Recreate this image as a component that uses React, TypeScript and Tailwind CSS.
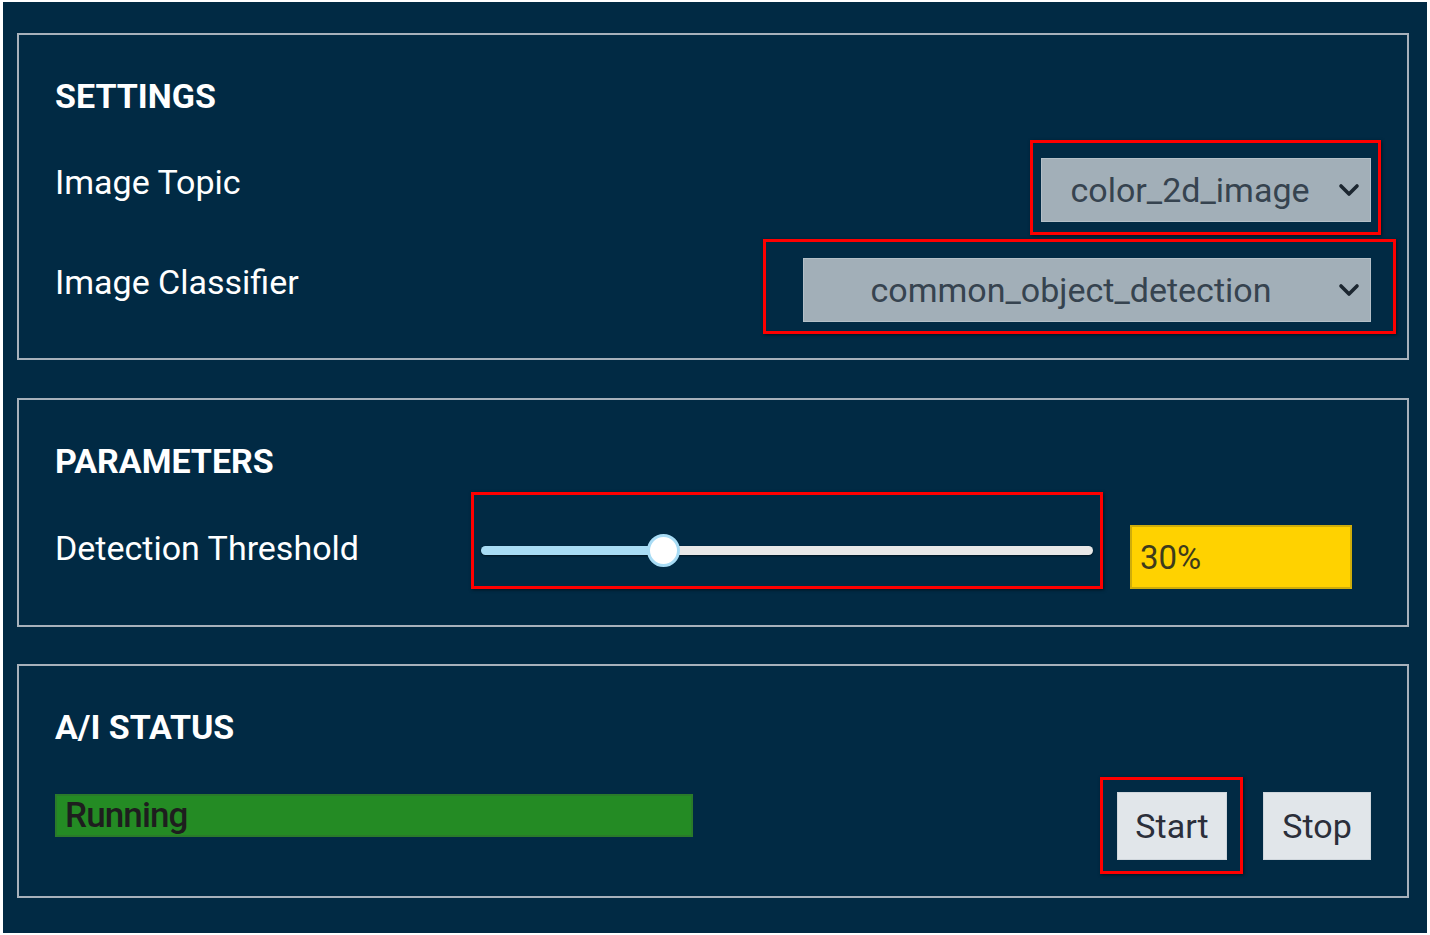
import React from "react";

const font = { fontFamily: "Roboto, 'Liberation Sans', sans-serif" };

function Chevron() {
  return (
    <svg width="22" height="14" viewBox="0 0 22 14" className="shrink-0">
      <path d="M3 3 L11 11 L19 3" fill="none" stroke="#1c2630" strokeWidth="3.6" strokeLinecap="round" strokeLinejoin="round" />
    </svg>
  );
}

function Select({ value, width }: { value: string; width: string }) {
  return (
    <div className={`relative ${width} h-[64px]`}>
      <div className="flex h-full w-full items-center bg-[#a2afb8] border border-[#b4c0c8] pr-[10px]">
        <span className="flex-1 text-center text-[34px] leading-none text-[#36434f]">{value}</span>
        <Chevron />
      </div>
    </div>
  );
}

function RedBox({ className }: { className: string }) {
  return <div className={`pointer-events-none absolute border-[3px] border-[#ff0000] shadow-[1px_1px_3px_rgba(0,0,0,0.5)] ${className}`} />;
}

function Panel({ title, children, className = "" }: { title: string; children: React.ReactNode; className?: string }) {
  return (
    <div className={`border-2 border-[#a7b1bb] px-[36px] pt-[41px] pb-[36px] ${className}`}>
      <div className="h-[40px] text-[34px] font-bold leading-[40px] text-white">{title}</div>
      {children}
    </div>
  );
}

export default function App() {
  return (
    <div className="h-[935px] w-[1430px] bg-white pb-[2px] pl-[3px] pr-[3px] pt-[2px]" style={font}>
      <div className="flex h-full w-full flex-col gap-[38px] bg-[#012a44] pl-[14px] pr-[18px] pt-[31px]">
        <Panel title="SETTINGS">
          <div className="mt-[42px] flex items-start justify-between">
            <div className="mt-[4px] h-[40px] text-[34px] leading-[40px] text-white">Image Topic</div>
            <div className="relative">
              <Select value="color_2d_image" width="w-[330px]" />
              <RedBox className="-left-[11px] -right-[10px] -top-[18px] -bottom-[13px]" />
            </div>
          </div>
          <div className="mt-[36px] flex items-start justify-between">
            <div className="mt-[4px] h-[40px] text-[34px] leading-[40px] text-white">Image Classifier</div>
            <div className="relative">
              <Select value="common_object_detection" width="w-[568px]" />
              <RedBox className="-left-[40px] -right-[25px] -top-[19px] -bottom-[12px]" />
            </div>
          </div>
        </Panel>

        <Panel title="PARAMETERS">
          <div className="mt-[44px] flex items-start">
            <div className="mt-[3px] h-[40px] w-[426px] text-[34px] leading-[40px] text-white">Detection Threshold</div>
            <div className="relative mt-[21px] h-[9px] w-[612px]">
              <div className="flex h-full w-full overflow-hidden rounded-full shadow-[0_1px_2px_rgba(0,0,0,0.5)]">
                <div className="h-full w-[182px] bg-[#a8dcf5]" />
                <div className="h-full flex-1 bg-[#e8e8e8]" />
              </div>
              <div className="absolute left-[166px] top-[-12px] h-[33px] w-[33px] rounded-full border-[3px] border-[#a8dcf5] bg-white" />
              <RedBox className="-left-[10px] -right-[10px] -top-[54px] -bottom-[34px]" />
            </div>
            <div className="ml-[37px] flex h-[64px] w-[222px] items-center border-2 border-[#cfad0a] bg-[#ffd200] pl-[8px] text-[33px] leading-none text-[#3d3b1c]">
              30%
            </div>
          </div>
        </Panel>

        <Panel title="A/I STATUS" className="-mt-[1px]">
          <div className="mt-[45px] flex items-start">
            <div className="mt-[2px] flex h-[43px] w-[638px] items-center border-2 border-[#2a7a2a] bg-[#248b24] pl-[8px] text-[35px] font-medium leading-none tracking-tight text-[#1e1e1e]">
              Running
            </div>
            <div className="ml-auto flex gap-[36px]">
              <div className="relative">
                <button className="flex h-[68px] w-[110px] items-center justify-center border border-[#cfd6dc] bg-[#e1e6ea] text-[34px] leading-none text-[#2b2f3a]">
                  Start
                </button>
                <RedBox className="-left-[17px] -right-[16px] -top-[15px] -bottom-[14px]" />
              </div>
              <button className="flex h-[68px] w-[108px] items-center justify-center border border-[#cfd6dc] bg-[#e1e6ea] text-[34px] leading-none text-[#2b2f3a]">
                Stop
              </button>
            </div>
          </div>
        </Panel>
      </div>
    </div>
  );
}
